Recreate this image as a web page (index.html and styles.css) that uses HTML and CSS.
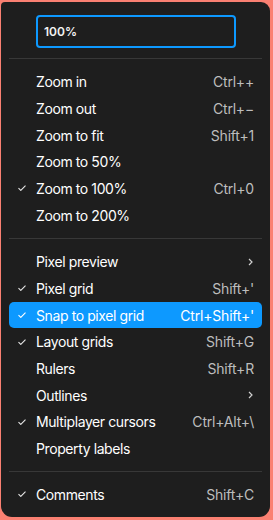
FILE: index.html
```html
<!DOCTYPE html>
<html>

<head>
	<meta charset="utf-8">
	<meta name="viewport" content="width=device-width, initial-scale=1">
	<title>Zoom menu</title>
	<link rel="stylesheet" href="styles.css">
</head>

<body>
	<div class="menu">
		<div class="zoom-field">
			<div class="zoom-input">100%</div>
		</div>

		<div class="sep"></div>

		<ul class="group">
			<li class="item"><span class="check"></span><span class="label">Zoom in</span><span class="key">Ctrl++</span></li>
			<li class="item"><span class="check"></span><span class="label">Zoom out</span><span class="key">Ctrl+−</span></li>
			<li class="item"><span class="check"></span><span class="label">Zoom to fit</span><span class="key">Shift+1</span></li>
			<li class="item"><span class="check"></span><span class="label">Zoom to 50%</span><span class="key"></span></li>
			<li class="item">
				<span class="check"><svg viewBox="0 0 8 6"><path d="M0.5 3.2 L2.8 5.4 L7.5 0.6" /></svg></span>
				<span class="label">Zoom to 100%</span><span class="key">Ctrl+0</span>
			</li>
			<li class="item"><span class="check"></span><span class="label">Zoom to 200%</span><span class="key"></span></li>
		</ul>

		<div class="sep"></div>

		<ul class="group">
			<li class="item">
				<span class="check"></span><span class="label">Pixel preview</span>
				<span class="key"><svg class="chevron" viewBox="0 0 5 8"><path d="M1 1 L4 4 L1 7" /></svg></span>
			</li>
			<li class="item">
				<span class="check"><svg viewBox="0 0 8 6"><path d="M0.5 3.2 L2.8 5.4 L7.5 0.6" /></svg></span>
				<span class="label">Pixel grid</span><span class="key">Shift+'</span>
			</li>
			<li class="item active">
				<span class="check"><svg viewBox="0 0 8 6"><path d="M0.5 3.2 L2.8 5.4 L7.5 0.6" /></svg></span>
				<span class="label">Snap to pixel grid</span><span class="key">Ctrl+Shift+'</span>
			</li>
			<li class="item">
				<span class="check"><svg viewBox="0 0 8 6"><path d="M0.5 3.2 L2.8 5.4 L7.5 0.6" /></svg></span>
				<span class="label">Layout grids</span><span class="key">Shift+G</span>
			</li>
			<li class="item"><span class="check"></span><span class="label">Rulers</span><span class="key">Shift+R</span></li>
			<li class="item">
				<span class="check"></span><span class="label">Outlines</span>
				<span class="key"><svg class="chevron" viewBox="0 0 5 8"><path d="M1 1 L4 4 L1 7" /></svg></span>
			</li>
			<li class="item">
				<span class="check"><svg viewBox="0 0 8 6"><path d="M0.5 3.2 L2.8 5.4 L7.5 0.6" /></svg></span>
				<span class="label">Multiplayer cursors</span><span class="key">Ctrl+Alt+\</span>
			</li>
			<li class="item"><span class="check"></span><span class="label">Property labels</span><span class="key"></span></li>
		</ul>

		<div class="sep"></div>

		<ul class="group last">
			<li class="item">
				<span class="check"><svg viewBox="0 0 8 6"><path d="M0.5 3.2 L2.8 5.4 L7.5 0.6" /></svg></span>
				<span class="label">Comments</span><span class="key">Shift+C</span>
			</li>
		</ul>
	</div>
</body>

</html>
```

FILE: styles.css
```css
body {
	margin: 0;
	background-color: #FA8072;
	font-family: "Inter", "Noto Sans", sans-serif;
}

.menu {
	width: 269px;
	margin: 2px 0 0 1px;
	background-color: #1E1E1E;
	border-radius: 4px 9px 11px 11px;
	color: #FFFFFF;
}

.zoom-field {
	padding: 13px 0 10px 35px;
}

.zoom-input {
	box-sizing: border-box;
	width: 200px;
	height: 33px;
	border: 2px solid #0D99FF;
	border-radius: 4px;
	padding-left: 6px;
	display: flex;
	align-items: center;
	font-size: 12px;
	font-weight: 600;
	color: #F2F2F2;
}

.sep {
	height: 1px;
	margin: 0 8px;
	background-color: #383838;
}

.group {
	list-style: none;
	margin: 0;
	padding: 9.5px 0;
}

.group.last {
	padding: 8.5px 0 9.5px;
}

.item {
	display: flex;
	align-items: center;
	height: 26.67px;
	margin: 0 8px;
	padding: 0 8px 0 9px;
	border-radius: 5px;
	font-size: 14px;
	letter-spacing: -0.4px;
}

.item.active {
	background-color: #0D99FF;
}

.check {
	width: 18px;
	display: flex;
	align-items: center;
}

.check svg {
	width: 8px;
	height: 6px;
	fill: none;
	stroke: #E6E6E6;
	stroke-width: 1.1;
}

.label {
	flex: 1;
}

.key {
	color: #BDBDBD;
	display: flex;
	align-items: center;
	letter-spacing: -0.2px;
}

.item.active .key,
.item.active .check svg {
	color: #FFFFFF;
	stroke: #FFFFFF;
}

.chevron {
	width: 5px;
	height: 8px;
	margin-right: 1px;
	fill: none;
	stroke: #D0D0D0;
	stroke-width: 1.2;
}
```
